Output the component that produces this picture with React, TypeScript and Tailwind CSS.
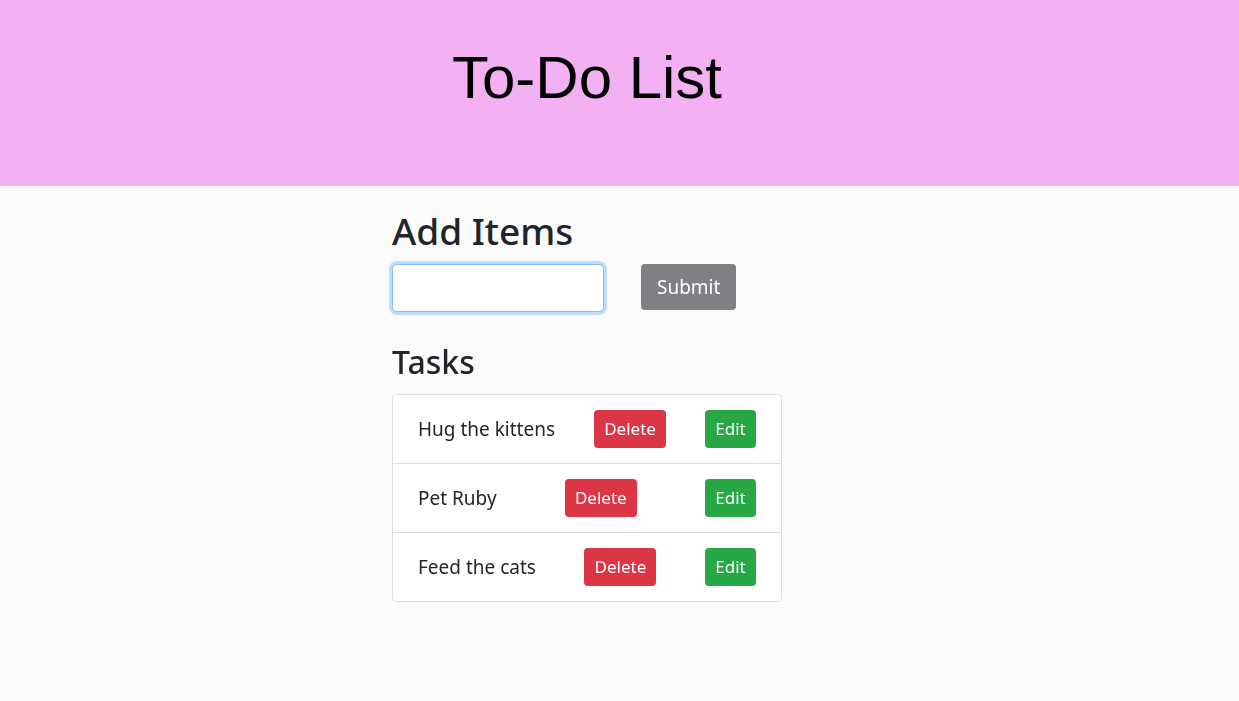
import { useState } from 'react';

const tasks = ['Hug the kittens', 'Pet Ruby', 'Feed the cats'];

const uiFont = { fontFamily: '"Noto Sans", "Open Sans", sans-serif' };

export default function App() {
  const [value, setValue] = useState('');

  return (
    <div className="min-h-[701px] bg-[#fbfbfb] text-[#212529]" style={uiFont}>
      <header className="h-[186px] bg-[#f3b0f3]">
        <div className="mx-auto w-[455px] pt-[40px]">
          <h1 className="w-[390px] text-center font-['Liberation_Sans',Arial,sans-serif] text-[60px] leading-[76px] text-black">
            To-Do List
          </h1>
        </div>
      </header>

      <main className="mx-auto w-[455px] pt-[22px]">
        <div className="w-[390px]">
          <h2 className="text-[37px] font-medium leading-[46px]">Add Items</h2>
          <div className="mt-[10px] flex items-start gap-[37px]">
            <input
              autoFocus
              value={value}
              onChange={(e) => setValue(e.target.value)}
              className="h-[48px] w-[212px] rounded-[5px] border border-[#80bdff] bg-white px-4 text-[18px] shadow-[0_0_0_3px_#bfdeff] outline-none"
            />
            <button className="h-[46px] rounded-[4px] bg-[#7e8084] px-4 text-[19px] text-white">
              Submit
            </button>
          </div>

          <h3 className="mt-[30px] text-[32px] font-medium leading-[40px]">Tasks</h3>
          <ul className="mt-[12px] rounded-[4px] border border-[#dfdfdf] bg-white">
            {tasks.map((task, i) => (
              <li
                key={task}
                className={`flex items-center justify-between px-[25px] ${
                  i > 0 ? 'h-[69px] border-t border-[#dfdfdf]' : 'h-[68px]'
                }`}
              >
                <span className="text-[19px]">{task}</span>
                <button className="h-[38px] w-[72px] rounded-[4px] bg-[#dc3545] text-[17px] text-white">
                  Delete
                </button>
                <button className="h-[38px] w-[51px] rounded-[4px] bg-[#28a745] text-[17px] text-white">
                  Edit
                </button>
              </li>
            ))}
          </ul>
        </div>
      </main>
    </div>
  );
}
